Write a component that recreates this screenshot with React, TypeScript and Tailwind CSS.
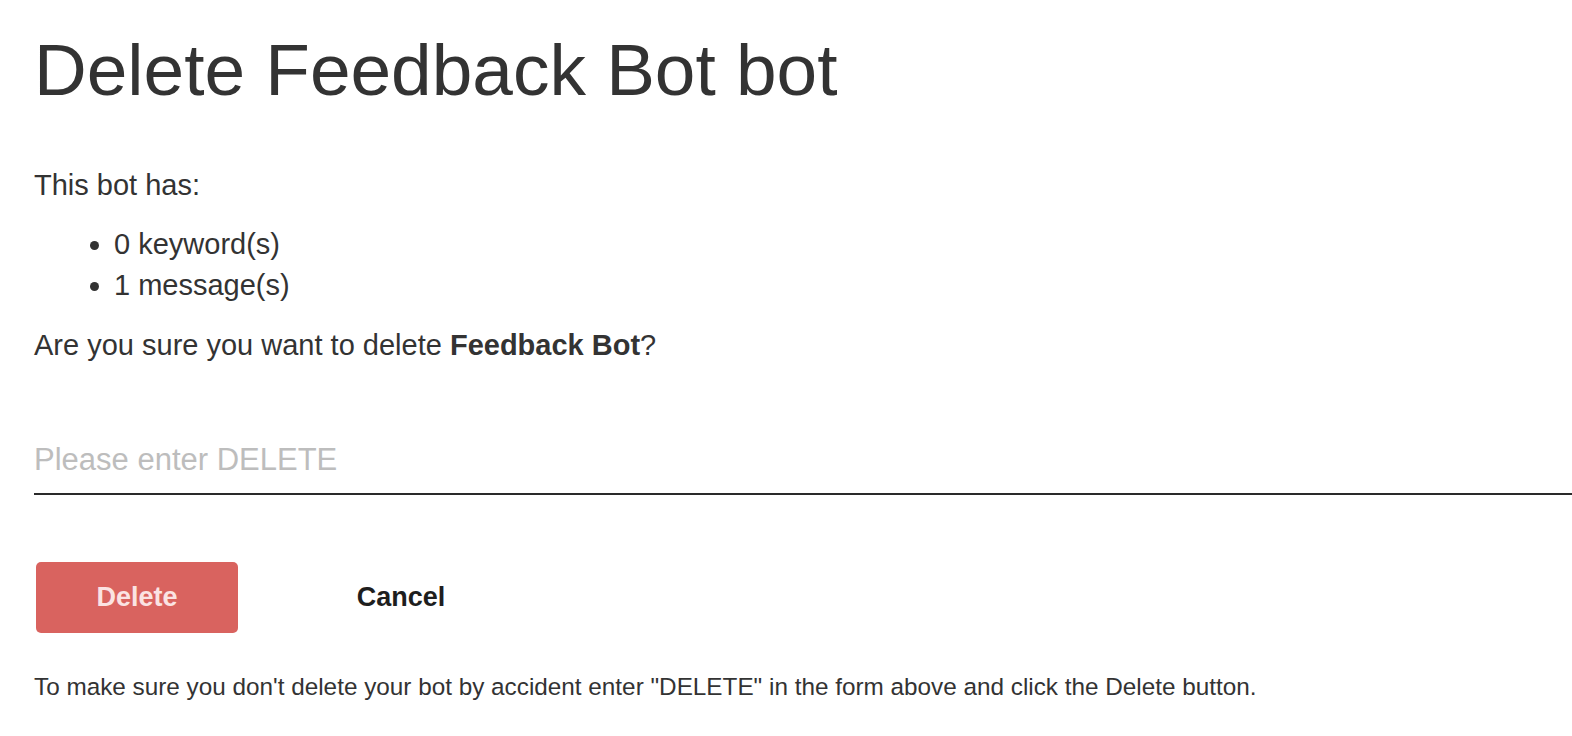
export default function App() {
  return (
    <div className="min-h-screen bg-white pl-[34px] text-[#333] font-['Liberation_Sans',Arial,sans-serif]">
      <h1 className="pt-[30px] text-[73px] leading-[80px] font-normal">Delete Feedback Bot bot</h1>

      <p className="mt-[58px] text-[29px] leading-[34px]">This bot has:</p>
      <ul className="mt-[22px] pl-[80px] list-disc text-[29px] leading-[41px]">
        <li>0 keyword(s)</li>
        <li>1 message(s)</li>
      </ul>
      <p className="mt-[22px] text-[29px] leading-[34px]">
        Are you sure you want to delete <strong className="font-bold">Feedback Bot</strong>?
      </p>

      <input
        type="text"
        placeholder="Please enter DELETE"
        className="mt-[78px] block w-full border-b-2 border-[#2a2a2a] bg-transparent pb-[13px] text-[31px] leading-[40px] outline-none placeholder:text-[#bdbdbd]"
      />

      <div className="mt-[67px] flex items-center">
        <button className="ml-[2px] h-[71px] w-[202px] rounded-[5px] bg-[#d9635f] text-[27px] font-bold text-[#fbe3e3]">
          Delete
        </button>
        <button className="ml-[83px] w-[160px] text-[27px] font-bold text-[#1e1e1e]">Cancel</button>
      </div>

      <p className="mt-[39px] text-[24.3px] leading-[30px]">
        To make sure you don't delete your bot by accident enter "DELETE" in the form above and click the Delete button.
      </p>
    </div>
  );
}
